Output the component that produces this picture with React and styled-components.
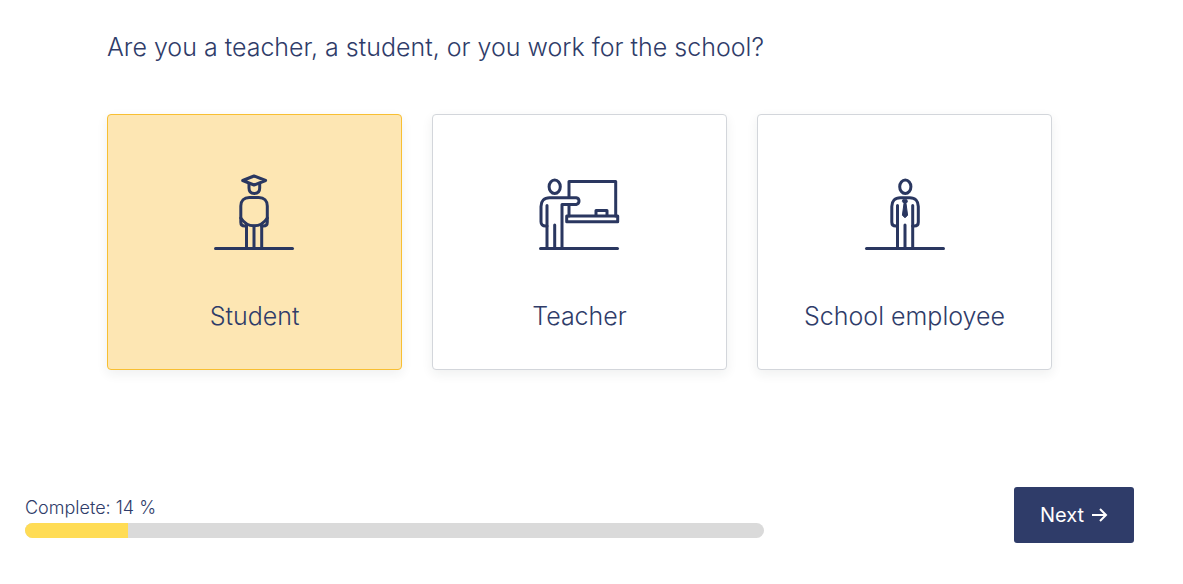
import React, { useState } from 'react';
import styled, { createGlobalStyle } from 'styled-components';

const GlobalStyle = createGlobalStyle`
  *,
  *::before,
  *::after {
    box-sizing: border-box;
  }

  body {
    margin: 0;
    background: #fff;
    color: #2f3c69;
    font-family: Inter, 'Liberation Sans', sans-serif;
    font-weight: 300;
  }
`;

const Page = styled.main`
  padding: 24px 49px 0 25px;
`;

const Question = styled.fieldset`
  max-width: 945px;
  min-width: 0;
  margin: 0 auto;
  padding: 0;
  border: 0;
`;

const Title = styled.legend`
  padding: 0;
  margin-bottom: 44px;
  font-size: 25px;
  line-height: 46px;
`;

const Options = styled.div`
  display: grid;
  grid-template-columns: repeat(3, 1fr);
  gap: 30px;
`;

const Card = styled.label`
  display: flex;
  flex-direction: column;
  align-items: center;
  padding: 55px 16px 33px;
  border: 1px solid ${({ $selected }) => ($selected ? '#f8bf32' : '#d3d6db')};
  border-radius: 4px;
  background: ${({ $selected }) => ($selected ? '#fde6b3' : '#fff')};
  box-shadow: 0 4px 12px rgba(33, 37, 41, 0.07);
  font-size: 25px;
  line-height: 40px;
  cursor: pointer;

  &:focus-within {
    border-color: #f8bf32;
  }
`;

const Radio = styled.input`
  appearance: none;
  width: 0;
  height: 0;
  margin: 0;
  outline: 0;
`;

const Icon = styled.svg`
  width: 81px;
  height: 80px;
  margin-bottom: 46px;
  fill: none;
  stroke: #2a3760;
  stroke-width: 3;
  stroke-linecap: round;
  stroke-linejoin: round;
`;

const Footer = styled.footer`
  display: flex;
  justify-content: space-between;
  align-items: flex-start;
  margin-top: 117px;
`;

const Progress = styled.div`
  width: 66.6667%;
  padding-top: 6px;
`;

const ProgressLabel = styled.div`
  font-size: 18px;
  line-height: 30px;
`;

const Track = styled.div`
  height: 15px;
  overflow: hidden;
  border-radius: 8px;
  background: #dadada;
`;

const Bar = styled.div`
  height: 100%;
  background: #ffdc55;
`;

const NextButton = styled.button`
  display: flex;
  justify-content: center;
  align-items: center;
  gap: 7px;
  width: 120px;
  height: 56px;
  padding: 0;
  border: 0;
  border-radius: 3px;
  background: #2f3c69;
  color: #fff;
  font-family: inherit;
  font-size: 20px;
  font-weight: 400;
  cursor: pointer;
`;

const Arrow = styled.svg`
  width: 17px;
  height: 16px;
  fill: none;
  stroke: currentColor;
  stroke-width: 2;
`;

function StudentIcon() {
  return (
    <Icon viewBox="0 0 81 80" aria-hidden="true">
      <path d="M1.5 78.5h77" />
      <path d="M28.7 10.5L40 6l11.6 4.5L40 15z" />
      <path d="M35 13.5V18c0 3.5 2 5.5 5.3 5.5s5.4-2 5.4-5.5v-4.5" />
      <path d="M32.5 56h-1.7c-2.6 0-4-1.2-4-3.8V36c0-5.3 3.2-8.5 8.5-8.5h9.5c5.3 0 8.5 3.2 8.5 8.5v16.2c0 2.6-1.4 3.8-4 3.8h-1.7" />
      <path d="M26.8 48c3.2 5 7.4 7.8 13.2 7.8S50.2 53 53.3 48" />
      <path d="M32.5 54v24M40 56v22M47.7 54v24" />
    </Icon>
  );
}

function TeacherIcon() {
  return (
    <Icon viewBox="0 0 81 80" aria-hidden="true">
      <path d="M1.5 78.5h77" />
      <ellipse cx="15.7" cy="16.7" rx="5.6" ry="6.7" />
      <path d="M8 56H6.5C3.6 56 2 54.5 2 51.7V36.5c0-5.3 3.2-8.8 8.5-8.8H37.2a3.4 3.4 0 010 6.7H23V78" />
      <path d="M8 35.5V78M15.7 55v23" />
      <path d="M30 27V11.5h46.7V46M30 35.5V46" />
      <path d="M27.7 46h51v5.7h-51z" />
      <path d="M57 45.5v-5h11v5" />
    </Icon>
  );
}

function EmployeeIcon() {
  return (
    <Icon viewBox="-1 0 81 80" aria-hidden="true">
      <path d="M1.5 78.5h77" />
      <ellipse cx="40.3" cy="16.7" rx="5.6" ry="6.7" />
      <path d="M32.5 56h-1.7c-2.6 0-4-1.2-4-3.8V36.5c0-5.3 3.2-8.8 8.5-8.8h9.5c5.3 0 8.5 3.5 8.5 8.8v15.7c0 2.6-1.4 3.8-4 3.8h-1.7" />
      <path d="M32.5 35.5V78M40 55v23M47.7 35.5V78" />
      <path
        d="M38.2 29.7h3.6l.6 2-1.4 1.8 1.6 11.7-2.6 2.6-2.6-2.6L39 33.5l-1.4-1.8z"
        fill="#2a3760"
        strokeWidth="1"
      />
    </Icon>
  );
}

const roles = [
  { id: 'student', label: 'Student', Picture: StudentIcon },
  { id: 'teacher', label: 'Teacher', Picture: TeacherIcon },
  { id: 'employee', label: 'School employee', Picture: EmployeeIcon },
];

function ProgressBar({ done, total }) {
  const value = (done / total) * 100;
  const percent = Math.round(value);

  return (
    <Progress>
      <ProgressLabel id="progress-label">Complete: {percent} %</ProgressLabel>
      <Track
        role="progressbar"
        aria-labelledby="progress-label"
        aria-valuemin={0}
        aria-valuemax={100}
        aria-valuenow={percent}
      >
        <Bar style={{ width: `${value}%` }} />
      </Track>
    </Progress>
  );
}

export default function App() {
  const [role, setRole] = useState('student');

  return (
    <>
      <GlobalStyle />
      <Page>
        <Question>
          <Title>Are you a teacher, a student, or you work for the school?</Title>
          <Options>
            {roles.map(({ id, label, Picture }) => (
              <Card key={id} $selected={role === id}>
                <Radio
                  type="radio"
                  name="role"
                  value={id}
                  checked={role === id}
                  onChange={() => setRole(id)}
                />
                <Picture />
                {label}
              </Card>
            ))}
          </Options>
        </Question>
        <Footer>
          <ProgressBar done={5} total={36} />
          <NextButton type="button">
            Next
            <Arrow viewBox="0 0 17 16" aria-hidden="true">
              <path d="M1 8h14M9 2l6 6-6 6" />
            </Arrow>
          </NextButton>
        </Footer>
      </Page>
    </>
  );
}
